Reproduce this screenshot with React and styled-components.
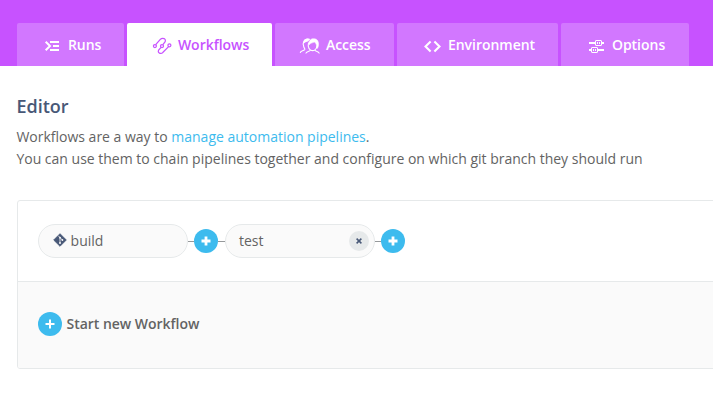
import React from "react";
import styled, { createGlobalStyle } from "styled-components";

const GlobalStyle = createGlobalStyle`
  * { box-sizing: border-box; }
  body {
    margin: 0;
    background: #fff;
    color: #636363;
    font-family: "Open Sans", "Noto Sans", sans-serif;
    font-size: 14px;
    overflow: hidden;
  }
`;

const Header = styled.header`
  height: 66px;
  padding: 23px 0 0 17px;
  background: #c752ff;
`;

const Tabs = styled.nav`
  display: flex;
  gap: 3px;
`;

const Tab = styled.a`
  display: flex;
  align-items: center;
  gap: 2.9px;
  width: ${(p) => p.$width}px;
  height: 43px;
  padding-left: 24px;
  border-radius: 2px 2px 0 0;
  background: ${(p) => (p.$active ? "#fff" : "#d277ff")};
  color: ${(p) => (p.$active ? "#c752ff" : "#fff")};
  font-weight: 600;
  line-height: 20px;
  letter-spacing: -0.02px;
  white-space: nowrap;
`;

const TabIcon = styled.svg`
  flex: none;
  width: 24px;
  height: 20px;
  margin-top: 3px;
  fill: none;
  stroke: currentColor;
`;

const Main = styled.main`
  padding-left: 17px;
`;

const Title = styled.h1`
  margin: 0 0 0 -0.6px;
  padding-top: 28px;
  color: #485877;
  font-size: 18px;
  font-weight: 600;
  line-height: 24px;
`;

const Intro = styled.p`
  margin: 8px 0 0 -0.6px;
  line-height: 22px;
  letter-spacing: -0.005px;
  white-space: nowrap;
`;

const Link = styled.a`
  color: #3dbbee;
`;

const Card = styled.section`
  margin-top: 30px;
  width: 720px;
  height: 169px;
  border: 1px solid #e6e9ea;
  border-radius: 3px;
  overflow: hidden;
`;

const WorkflowRow = styled.div`
  display: flex;
  align-items: center;
  height: 81px;
  padding-left: 20px;
  border-bottom: 1px solid #e6e9ea;
`;

const StartRow = styled.div`
  display: flex;
  align-items: center;
  gap: 4.5px;
  height: 86px;
  padding: 0 0 2px 20px;
  background: #fafafa;
  font-weight: 600;
  letter-spacing: -0.03px;
`;

const StartLabel = styled.span`
  line-height: 20px;
`;

const Step = styled.div`
  display: flex;
  align-items: center;
  width: 150px;
  height: 34px;
  padding: 0 5px 0 13px;
  border: 1px solid #e6e9ea;
  border-radius: 17px;
  background: #fafafa;
`;

const StepName = styled.span`
  padding-bottom: 1px;
  line-height: 21px;
`;

const GitIcon = styled.svg`
  width: 14px;
  height: 14px;
  margin: -3px 3.6px 0 1px;
`;

const Connector = styled.span`
  width: ${(p) => p.$width}px;
  height: 1px;
  background: #96999b;
`;

const RoundButton = styled.button`
  display: grid;
  place-items: center;
  flex: none;
  width: 24px;
  height: 24px;
  padding: 0;
  border: 0;
  border-radius: 50%;
  background: #3dbbee;
`;

const RemoveButton = styled(RoundButton)`
  width: 20px;
  height: 20px;
  margin-left: auto;
  background: #e6e9ea;
`;

function Plus({ thin }) {
  return (
    <svg width="10" height="10" viewBox="0 0 10 10">
      <path d="M5 .5v9M.5 5h9" stroke="#fff" strokeWidth={thin ? 2 : 2.8} />
    </svg>
  );
}

function RunsIcon() {
  return (
    <TabIcon viewBox="0 0 24 20" strokeWidth="2">
      <path d="M4.7 5.7L9 10l-4.3 4.3M9 6h9M12 10h6M9 14h9" />
    </TabIcon>
  );
}

function WorkflowsIcon() {
  return (
    <TabIcon viewBox="0 0 24 20" strokeWidth="1.25">
      <circle cx="3.9" cy="10" r="1.5" />
      <circle cx="11" cy="10" r="1.5" />
      <circle cx="18.4" cy="9.3" r="1.5" />
      <path d="M4.7 8.7L9.3 3.4C11.5 1.2 15.7 2.8 14 5.9L11.9 8.7M10.1 11.3L7.6 14.2C6.2 16.9 9.9 18.6 12 16.3L17.6 10.6" />
    </TabIcon>
  );
}

function AccessIcon() {
  return (
    <TabIcon viewBox="0 0 24 20" strokeWidth="1.1">
      <path d="M1.2 16.8c.4-2.2 3-1.7 4.5-3.2.6-.8-.4-1.4-.8-2.4-.8-1.7-1-4.1-.2-5.7C5.7 3 8.5 2.8 10.4 3.5" />
      <path d="M5 6.5c.4-2.6 2.7-3.9 5.2-3.2L8.7 5c-1.5.2-2.6.7-3.7 1.5z" fill="currentColor" />
      <path d="M6.8 17.5c.5-2.3 3.7-1.5 4.7-3.4-2.6-1.9-3.1-6.4-1-8.2M18 9.5c-.1 2.1-.8 3.6-2.2 4.6 1 1.9 4 1.1 4.5 3.4M11.5 14c1.6.9 2.8.9 4.3 0" />
      <path d="M10.1 8.8C9.5 4.8 11.9 2.2 15 2.8c3.6-.3 4.9 3.7 4.5 6.3-.1 1.4-.6 2.8-1.6 3.6.3-2.6-.6-4.8-2.1-6.6-1.6.5-4.1.8-5.7 2.7z" fill="currentColor" strokeWidth=".5" />
    </TabIcon>
  );
}

function EnvironmentIcon() {
  return (
    <TabIcon viewBox="0 0 24 20" strokeWidth="2.1">
      <path d="M9.6 5.4L4.5 10.5l5.1 5.1M13.4 5.4l5.1 5.1-5.1 5.1" />
    </TabIcon>
  );
}

function OptionsIcon() {
  return (
    <TabIcon viewBox="0 0 24 20" strokeWidth="1">
      <path d="M4 7h6M17 7h2M4 14h2M13 14h6" strokeWidth="2" />
      <rect x="10.5" y="4.5" width="6" height="5" rx=".5" />
      <rect x="6.5" y="11.5" width="6" height="5" rx=".5" />
      <path d="M12.5 6v2M14.5 6v2M8.5 13v2M10.5 13v2" />
    </TabIcon>
  );
}

const tabs = [
  { label: "Runs", width: 107, Icon: RunsIcon },
  { label: "Workflows", width: 145, Icon: WorkflowsIcon, active: true },
  { label: "Access", width: 119, Icon: AccessIcon },
  { label: "Environment", width: 161, Icon: EnvironmentIcon },
  { label: "Options", width: 128, Icon: OptionsIcon },
];

export default function App() {
  return (
    <>
      <GlobalStyle />
      <Header>
        <Tabs>
          {tabs.map(({ label, width, Icon, active }) => (
            <Tab key={label} $width={width} $active={active}>
              <Icon />
              {label}
            </Tab>
          ))}
        </Tabs>
      </Header>
      <Main>
        <Title>Editor</Title>
        <Intro>
          Workflows are a way to <Link>manage automation pipelines</Link>.
          <br />
          You can use them to chain pipelines together and configure on which git branch they should run
        </Intro>
        <Card>
          <WorkflowRow>
            <Step>
              <GitIcon viewBox="0 0 14 14">
                <path d="M7 .7L13.3 7 7 13.3.7 7z" fill="#485877" stroke="#485877" strokeWidth=".8" strokeLinejoin="round" />
                <path d="M5.2 2.7l1.8 1.8v6M7.2 4.8l2.3 2.3" fill="none" stroke="#fafafa" strokeWidth=".8" />
                <circle cx="7" cy="4.7" r=".9" fill="#fafafa" />
                <circle cx="7" cy="10" r=".9" fill="#fafafa" />
                <circle cx="9.4" cy="7" r=".9" fill="#fafafa" />
              </GitIcon>
              <StepName>build</StepName>
            </Step>
            <Connector $width={6} />
            <RoundButton aria-label="Add step"><Plus /></RoundButton>
            <Connector $width={7} />
            <Step>
              <StepName>test</StepName>
              <RemoveButton aria-label="Remove step">
                <svg width="6" height="6" viewBox="0 0 6 6">
                  <path d="M.6.6l4.8 4.8M5.4.6L.6 5.4" stroke="#485877" strokeWidth="1.5" />
                </svg>
              </RemoveButton>
            </Step>
            <Connector $width={6} />
            <RoundButton aria-label="Add step"><Plus /></RoundButton>
          </WorkflowRow>
          <StartRow>
            <RoundButton aria-label="Start new workflow"><Plus thin /></RoundButton>
            <StartLabel>Start new Workflow</StartLabel>
          </StartRow>
        </Card>
      </Main>
    </>
  );
}
